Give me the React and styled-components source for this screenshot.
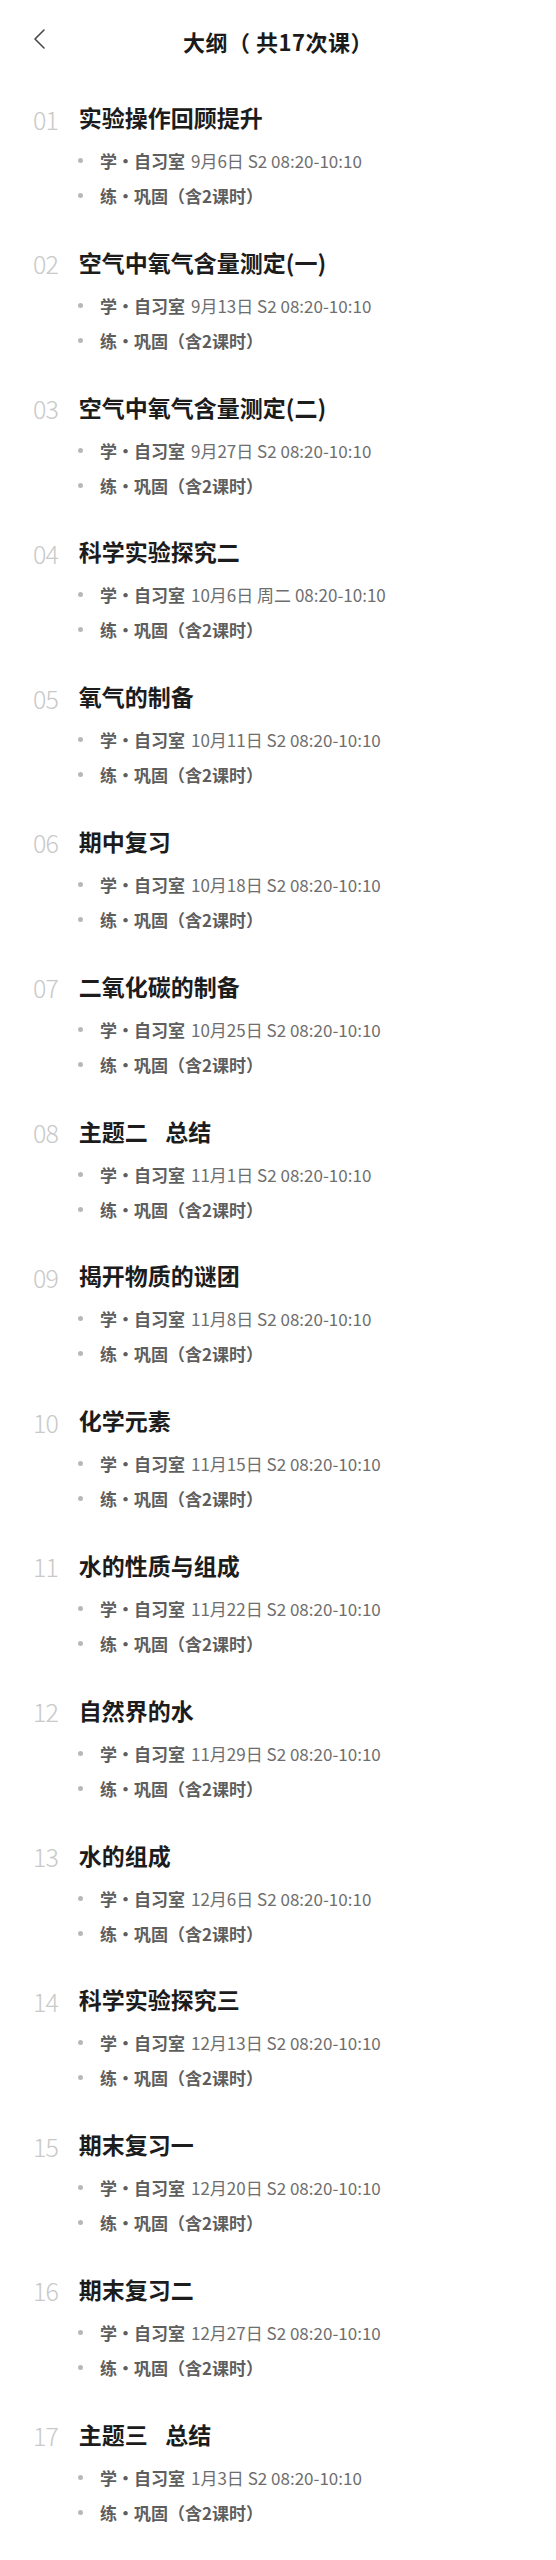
import styled, { createGlobalStyle } from "styled-components";

const GlobalStyle = createGlobalStyle`
  body {
    margin: 0;
    background: #fff;
    font-family: "Noto Sans CJK SC", "Noto Sans", sans-serif;
  }
`;

const Page = styled.div`
  width: 556px;
  min-height: 2560px;
  background: #fff;
`;

const Header = styled.header`
  height: 82px;
  display: grid;
  grid-template-columns: 1fr auto 1fr;
  align-items: center;
`;

const BackButton = styled.button`
  justify-self: start;
  margin-left: 31px;
  margin-top: -4px;
  padding: 0;
  border: none;
  background: none;
  display: flex;
  align-items: center;
  color: #4a4a4a;
`;

const Title = styled.h1`
  margin: 0;
  font-size: 22px;
  font-weight: 700;
  color: #1a1a1a;
  letter-spacing: 0.5px;
`;

const List = styled.ol`
  list-style: none;
  margin: 0;
  padding: 19px 0 0 33px;
`;

const Item = styled.li`
  padding-bottom: 32.8px;
`;

const ItemHead = styled.div`
  display: flex;
  align-items: center;
  height: 32px;
`;

const Num = styled.span`
  font-size: 25px;
  font-weight: 300;
  color: #c9c9c9;
  letter-spacing: -1px;
  margin-right: 21px;
  line-height: 32px;
  margin-top: 3px;
`;

const LessonName = styled.h2`
  margin: 0;
  font-size: 23px;
  font-weight: 700;
  color: #1c1c1c;
  line-height: 32px;
  white-space: pre;
  word-spacing: 3.5px;
`;

const SubList = styled.ul`
  list-style: none;
  margin: 10px 0 0;
  padding: 0 0 0 45px;
`;

const SubRow = styled.li`
  display: flex;
  align-items: center;
  gap: 17px;
  height: 35px;
  font-size: 17px;
  color: #6e6e6e;

  &::before {
    content: "";
    width: 5px;
    height: 5px;
    border-radius: 50%;
    background: #b8b8b8;
    flex: none;
  }
`;

const Tag = styled.span`
  font-weight: 700;
  color: #5e5e5e;
  margin-right: 6px;
`;

const lessons = [
  ["实验操作回顾提升", "9月6日 S2 08:20-10:10"],
  ["空气中氧气含量测定(一)", "9月13日 S2 08:20-10:10"],
  ["空气中氧气含量测定(二)", "9月27日 S2 08:20-10:10"],
  ["科学实验探究二", "10月6日 周二 08:20-10:10"],
  ["氧气的制备", "10月11日 S2 08:20-10:10"],
  ["期中复习", "10月18日 S2 08:20-10:10"],
  ["二氧化碳的制备", "10月25日 S2 08:20-10:10"],
  ["主题二  总结", "11月1日 S2 08:20-10:10"],
  ["揭开物质的谜团", "11月8日 S2 08:20-10:10"],
  ["化学元素", "11月15日 S2 08:20-10:10"],
  ["水的性质与组成", "11月22日 S2 08:20-10:10"],
  ["自然界的水", "11月29日 S2 08:20-10:10"],
  ["水的组成", "12月6日 S2 08:20-10:10"],
  ["科学实验探究三", "12月13日 S2 08:20-10:10"],
  ["期末复习一", "12月20日 S2 08:20-10:10"],
  ["期末复习二", "12月27日 S2 08:20-10:10"],
  ["主题三  总结", "1月3日 S2 08:20-10:10"],
];

const BackIcon = () => (
  <svg width="15" height="22" viewBox="0 0 15 22" fill="none">
    <path d="M13 2 L4 11 L13 20" stroke="currentColor" strokeWidth="1.6" strokeLinecap="round" strokeLinejoin="round" />
  </svg>
);

export default function App() {
  return (
    <Page>
      <GlobalStyle />
      <Header>
        <BackButton aria-label="返回">
          <BackIcon />
        </BackButton>
        <Title>大纲（ 共17次课）</Title>
        <span />
      </Header>
      <List>
        {lessons.map(([name, time], i) => (
          <Item key={i}>
            <ItemHead>
              <Num>{String(i + 1).padStart(2, "0")}</Num>
              <LessonName>{name}</LessonName>
            </ItemHead>
            <SubList>
              <SubRow>
                <span>
                  <Tag>学・自习室</Tag>
                  {time}
                </span>
              </SubRow>
              <SubRow>
                <Tag>练・巩固（含2课时）</Tag>
              </SubRow>
            </SubList>
          </Item>
        ))}
      </List>
    </Page>
  );
}
